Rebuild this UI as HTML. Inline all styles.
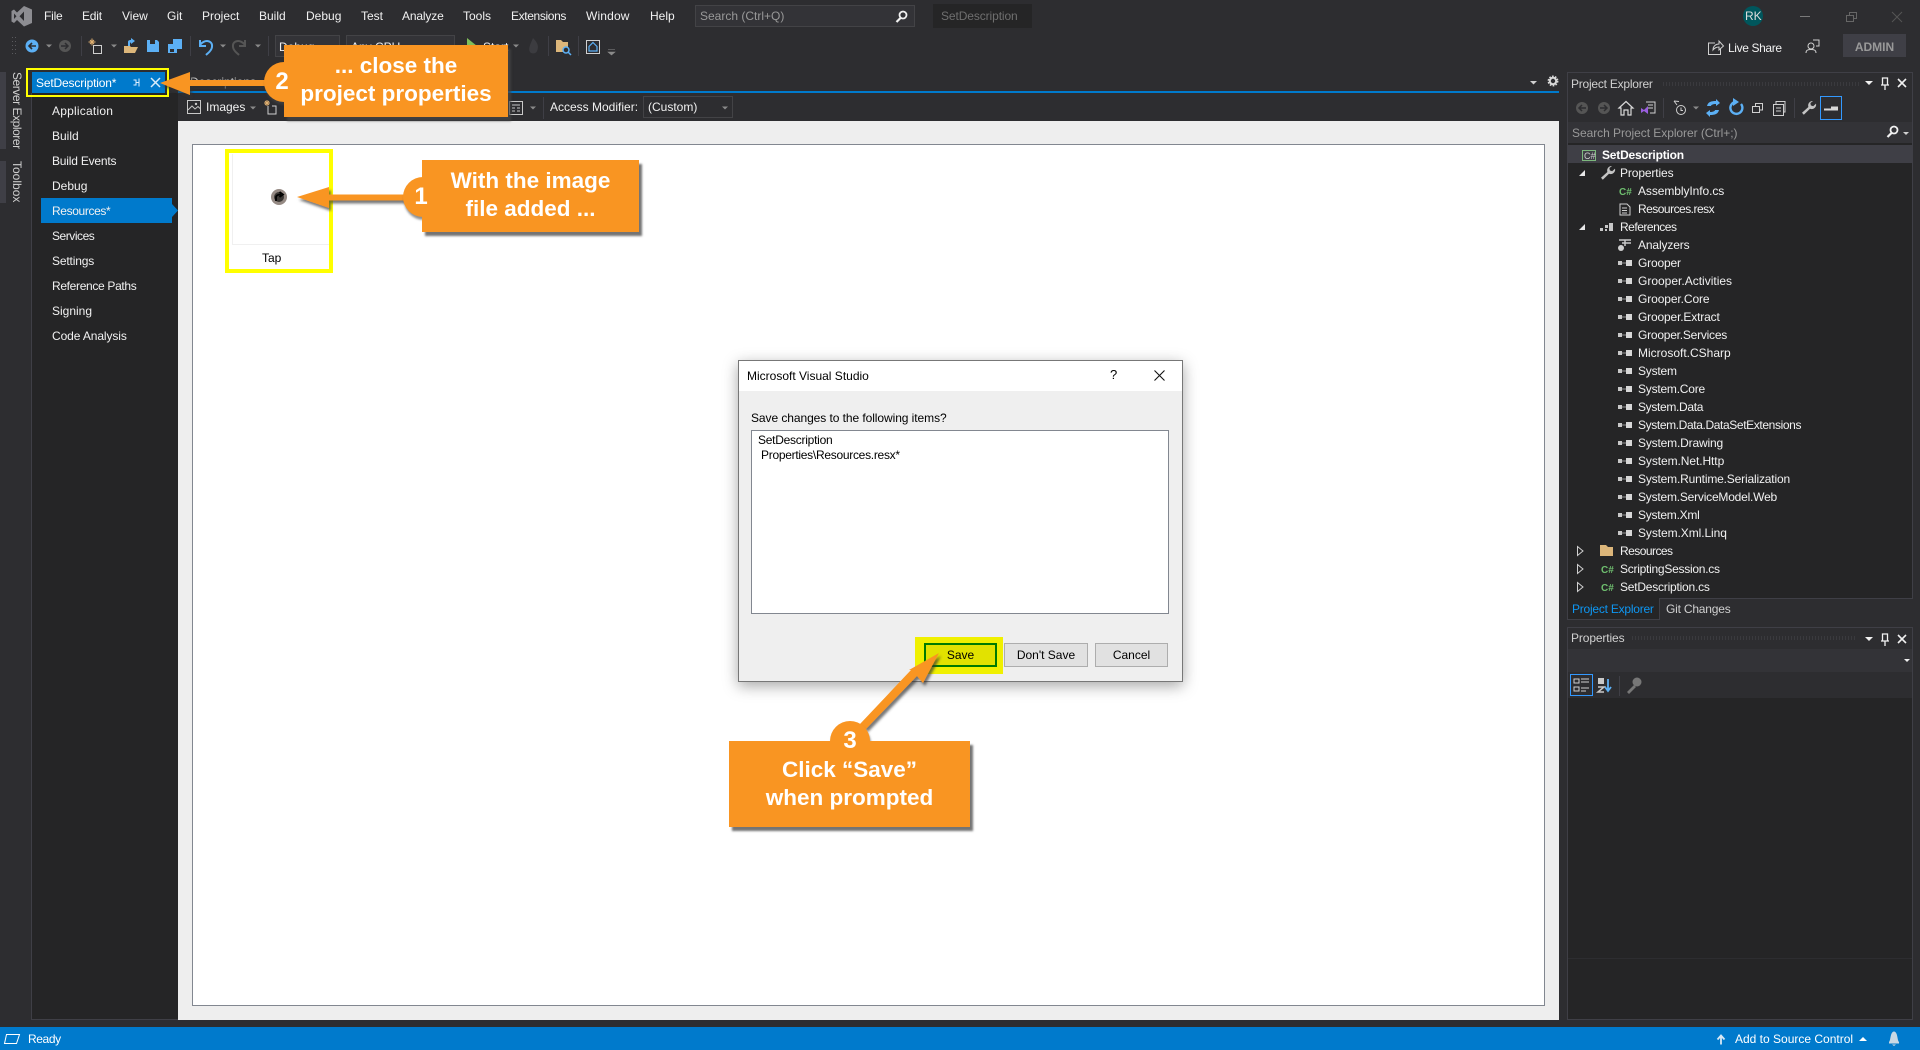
<!DOCTYPE html>
<html lang="en"><head><meta charset="utf-8"><title>SetDescription - Microsoft Visual Studio</title>
<style>
html,body{margin:0;padding:0;width:1920px;height:1050px;overflow:hidden;background:#2d2d30}
body{position:relative;font:12px/16px "Liberation Sans",sans-serif;color:#f1f1f1}
div,span.t{position:absolute}
.t{position:absolute;white-space:nowrap;line-height:16px;font-size:12px}
svg{position:absolute;left:0;top:0;overflow:visible}
.c{position:absolute;background:#f99522;box-shadow:3px 4px 2px rgba(70,70,70,.75);color:#fff;font-weight:bold;font-size:22.5px;line-height:28px;text-align:center}
.n{position:absolute;width:40px;height:40px;border-radius:50%;background:#f99522;box-shadow:1px 3px 2px rgba(70,70,70,.6)}
.g{position:absolute;width:40px;height:40px;color:#fff;font-weight:bold;font-size:24px;line-height:40px;text-align:center}
.btn{position:absolute;top:643px;height:22px;background:#e1e1e1;border:1px solid #adadad;color:#000;text-align:center;line-height:22px}
.d{color:#000}
</style></head><body>
<svg width="0" height="0" style="position:absolute"><defs>
<g id="r"><rect x="0" y="-2" width="4" height="4" fill="#c8c8c8"/><rect x="4" y="-.5" width="4" height="1" fill="#999"/><rect x="8" y="-3" width="6" height="6" fill="#d8d8d8"/></g>
<g id="cs"><text x="0" y="4" font-family="Liberation Sans" font-size="10" font-weight="bold" fill="#6fbf6f">C#</text></g>
<path id="car" d="M-3 -1.5H3L0 1.5Z" fill="#8a8a8a"/>
<path id="tri" d="M-3.5 -4.5L2 0L-3.5 4.5Z" fill="none" stroke="#d0d0d0" stroke-width="1"/>
<path id="wr" d="M5 -7a4.5 4.5 0 0 0-4.6 6l-6.4 5.8 1.8 2 6.2-6a4.5 4.5 0 0 0 6-5.2l-2.8 2.6-2.4-.8-.4-2.4z" fill="#c4c4c4"/>
</defs></svg>

<!-- Main document regions -->
<div style="left:31px;top:93px;width:147px;height:927px;background:#252526;border-left:1px solid #3f3f46;box-sizing:border-box;border-bottom:1px solid #3f3f46"></div>
<div style="left:178px;top:91px;width:1381px;height:2px;background:#007acc"></div>
<div style="left:178px;top:93px;width:1381px;height:28px;background:#2d2d30"></div>
<div style="left:178px;top:121px;width:1381px;height:899px;background:#eeeeee"></div>
<div style="left:192px;top:144px;width:1353px;height:862px;background:#fff;border:1px solid #828790;box-sizing:border-box"></div>
<div style="left:0;top:1020px;width:1920px;height:7px;background:#2d2d30"></div>
<div style="left:0;top:1027px;width:1920px;height:23px;background:#007acc"></div>

<!-- Menu bar -->
<span class="t" style="left:44px;top:8px;letter-spacing:-.2px">File</span>
<span class="t" style="left:82px;top:8px;letter-spacing:-.2px">Edit</span>
<span class="t" style="left:122px;top:8px">View</span>
<span class="t" style="left:167px;top:8px">Git</span>
<span class="t" style="left:202px;top:8px">Project</span>
<span class="t" style="left:259px;top:8px">Build</span>
<span class="t" style="left:306px;top:8px">Debug</span>
<span class="t" style="left:361px;top:8px">Test</span>
<span class="t" style="left:402px;top:8px;letter-spacing:-.15px">Analyze</span>
<span class="t" style="left:463px;top:8px">Tools</span>
<span class="t" style="left:511px;top:8px;letter-spacing:-.37px">Extensions</span>
<span class="t" style="left:586px;top:8px;letter-spacing:.15px">Window</span>
<span class="t" style="left:650px;top:8px">Help</span>
<div style="left:695px;top:5px;width:220px;height:22px;background:#333337;border:1px solid #434346;box-sizing:border-box"></div>
<span class="t" style="left:700px;top:8px;color:#999">Search (Ctrl+Q)</span>
<div style="left:933px;top:4px;width:99px;height:24px;background:#252526"></div>
<span class="t" style="left:941px;top:8px;color:#6f6f6f;letter-spacing:-.1px">SetDescription</span>
<div style="left:1743px;top:6px;width:20px;height:20px;border-radius:50%;background:#00565c"></div>
<span class="t" style="left:1745px;top:8px;width:16px;text-align:center;color:#ddd">RK</span>

<!-- Toolbar -->
<div style="left:275px;top:35px;width:65px;height:22px;background:#333337;border:1px solid #434346;box-sizing:border-box"></div>
<span class="t" style="left:279px;top:39px">Debug</span>
<div style="left:346px;top:35px;width:109px;height:22px;background:#333337;border:1px solid #434346;box-sizing:border-box"></div>
<span class="t" style="left:351px;top:39px">Any CPU</span>
<span class="t" style="left:483px;top:39px">Start</span>
<span class="t" style="left:1728px;top:40px;letter-spacing:-.37px">Live Share</span>
<div style="left:1843px;top:34px;width:63px;height:23px;background:#3f3f46"></div>
<span class="t" style="left:1843px;top:39px;width:63px;text-align:center;color:#999;font-weight:bold;font-size:12px">ADMIN</span>

<!-- Left vertical tabs -->
<div style="left:0;top:72px;width:6px;height:77px;background:#3f3f46"></div>
<div style="left:0;top:161px;width:6px;height:42px;background:#3f3f46"></div>
<span class="t" style="left:10px;top:72px;writing-mode:vertical-rl;color:#d0d0d0;line-height:14px;letter-spacing:-.45px">Server Explorer</span>
<span class="t" style="left:10px;top:161px;writing-mode:vertical-rl;color:#d0d0d0;line-height:14px">Toolbox</span>

<!-- Document tab -->
<span class="t" style="left:190px;top:74px;color:#c8c8c8">Descriptions</span>
<div style="left:32px;top:72px;width:133px;height:21px;background:#007acc"></div>
<span class="t" style="left:36px;top:75px;color:#fff;letter-spacing:-.16px">SetDescription*</span>
<div style="left:26px;top:68px;width:143px;height:29px;border:2.5px solid #ffff00;box-sizing:border-box"></div>

<!-- Nav list -->
<div style="left:41px;top:198px;width:131px;height:25px;background:#007acc"></div>
<span class="t" style="left:52px;top:103px;letter-spacing:.22px">Application</span>
<span class="t" style="left:52px;top:128px">Build</span>
<span class="t" style="left:52px;top:153px;letter-spacing:-.2px">Build Events</span>
<span class="t" style="left:52px;top:178px">Debug</span>
<span class="t" style="left:52px;top:203px;letter-spacing:-.37px">Resources*</span>
<span class="t" style="left:52px;top:228px;letter-spacing:-.46px">Services</span>
<span class="t" style="left:52px;top:253px;letter-spacing:-.15px">Settings</span>
<span class="t" style="left:52px;top:278px;letter-spacing:-.33px">Reference Paths</span>
<span class="t" style="left:52px;top:303px">Signing</span>
<span class="t" style="left:52px;top:328px;letter-spacing:-.1px">Code Analysis</span>

<!-- Designer toolbar -->
<span class="t" style="left:206px;top:99px">Images</span>
<span class="t" style="left:550px;top:99px">Access Modifier:</span>
<div style="left:643px;top:96px;width:90px;height:22px;background:#2d2d30;border:1px solid #434346;box-sizing:border-box"></div>
<span class="t" style="left:648px;top:99px">(Custom)</span>

<!-- Resource thumbnail -->
<div style="left:225px;top:149px;width:108px;height:124px;border:4.5px solid #ffff00;box-sizing:border-box;background:#fff"></div>
<div style="left:232px;top:154px;width:97px;height:91px;border-left:1px solid #f0f0f0;border-bottom:1px solid #f0f0f0;box-sizing:border-box"></div>
<span class="t d" style="left:262px;top:250px">Tap</span>

<!-- Right: Project Explorer -->
<div style="left:1567px;top:72px;width:346px;height:527px;background:#252526;border:1px solid #3f3f46;box-sizing:border-box"></div>
<div style="left:1568px;top:73px;width:344px;height:49px;background:#2d2d30"></div>
<span class="t" style="left:1571px;top:76px;color:#d0d0d0;letter-spacing:-.23px">Project Explorer</span>
<div style="left:1568px;top:122px;width:344px;height:21px;background:#333337"></div>
<span class="t" style="left:1572px;top:125px;color:#999;letter-spacing:-.05px">Search Project Explorer (Ctrl+;)</span>
<div style="left:1568px;top:145px;width:344px;height:18px;background:#3f3f46"></div>
<span class="t" style="left:1602px;top:147px;font-weight:bold;color:#fff;letter-spacing:-.2px">SetDescription</span>
<span class="t" style="left:1620px;top:165px;letter-spacing:-.12px">Properties</span>
<span class="t" style="left:1638px;top:183px;letter-spacing:-.08px">AssemblyInfo.cs</span>
<span class="t" style="left:1638px;top:201px;letter-spacing:-.52px">Resources.resx</span>
<span class="t" style="left:1620px;top:219px;letter-spacing:-.49px">References</span>
<span class="t" style="left:1638px;top:237px;letter-spacing:-.13px">Analyzers</span>
<span class="t" style="left:1638px;top:255px;letter-spacing:-.17px">Grooper</span>
<span class="t" style="left:1638px;top:273px">Grooper.Activities</span>
<span class="t" style="left:1638px;top:291px;letter-spacing:-.1px">Grooper.Core</span>
<span class="t" style="left:1638px;top:309px;letter-spacing:-.16px">Grooper.Extract</span>
<span class="t" style="left:1638px;top:327px;letter-spacing:-.23px">Grooper.Services</span>
<span class="t" style="left:1638px;top:345px">Microsoft.CSharp</span>
<span class="t" style="left:1638px;top:363px;letter-spacing:-.2px">System</span>
<span class="t" style="left:1638px;top:381px;letter-spacing:-.22px">System.Core</span>
<span class="t" style="left:1638px;top:399px;letter-spacing:-.33px">System.Data</span>
<span class="t" style="left:1638px;top:417px;letter-spacing:-.38px">System.Data.DataSetExtensions</span>
<span class="t" style="left:1638px;top:435px;letter-spacing:-.17px">System.Drawing</span>
<span class="t" style="left:1638px;top:453px;letter-spacing:-.08px">System.Net.Http</span>
<span class="t" style="left:1638px;top:471px;letter-spacing:-.17px">System.Runtime.Serialization</span>
<span class="t" style="left:1638px;top:489px;letter-spacing:-.21px">System.ServiceModel.Web</span>
<span class="t" style="left:1638px;top:507px;letter-spacing:-.24px">System.Xml</span>
<span class="t" style="left:1638px;top:525px;letter-spacing:-.08px">System.Xml.Linq</span>
<span class="t" style="left:1620px;top:543px;letter-spacing:-.54px">Resources</span>
<span class="t" style="left:1620px;top:561px;letter-spacing:-.26px">ScriptingSession.cs</span>
<span class="t" style="left:1620px;top:579px;letter-spacing:-.22px">SetDescription.cs</span>
<div style="left:1567px;top:598px;width:93px;height:22px;background:#252526;border:1px solid #3f3f46;border-top:0;box-sizing:border-box"></div>
<span class="t" style="left:1572px;top:601px;color:#0e97f3;letter-spacing:-.23px">Project Explorer</span>
<span class="t" style="left:1666px;top:601px;color:#d0d0d0;letter-spacing:-.2px">Git Changes</span>

<!-- Right: Properties -->
<div style="left:1567px;top:627px;width:346px;height:393px;background:#252526;border:1px solid #3f3f46;box-sizing:border-box"></div>
<div style="left:1568px;top:628px;width:344px;height:70px;background:#2d2d30"></div>
<div style="left:1568px;top:649px;width:344px;height:23px;background:#333337"></div>
<div style="left:1568px;top:958px;width:344px;height:1px;background:#2d2d30"></div>
<span class="t" style="left:1571px;top:630px;color:#d0d0d0;letter-spacing:-.12px">Properties</span>

<!-- Status bar text -->
<span class="t" style="left:28px;top:1031px;color:#fff;letter-spacing:-.4px">Ready</span>
<span class="t" style="left:1735px;top:1031px;color:#fff">Add to Source Control</span>

<!-- Icons -->
<svg width="1920" height="1050" viewBox="0 0 1920 1050" fill="none">
<!-- VS logo -->
<path d="M24 6L32 9.5V23L24 26.5L17 20L14 23L11.5 21.5V11L14 9.5L17 12.5ZM24 11.5L19.5 16.3L24 21ZM14 13.5V19L16.5 16.3Z" fill="#8d8d92"/>
<!-- grip -->
<g fill="#5a5a5e"><rect x="12" y="37" width="1" height="1"/><rect x="15" y="37" width="1" height="1"/><rect x="12" y="41" width="1" height="1"/><rect x="15" y="41" width="1" height="1"/><rect x="12" y="45" width="1" height="1"/><rect x="15" y="45" width="1" height="1"/><rect x="12" y="49" width="1" height="1"/><rect x="15" y="49" width="1" height="1"/><rect x="12" y="53" width="1" height="1"/><rect x="15" y="53" width="1" height="1"/></g>
<!-- back/forward -->
<circle cx="32" cy="46" r="6.5" fill="#5cb0f5"/><path d="M36 46H29M32 43L29 46L32 49" stroke="#2d2d30" stroke-width="1.6"/>
<use href="#car" x="49" y="46"/>
<circle cx="65" cy="46" r="6" fill="#555"/><path d="M61 46H68M65 43L68 46L65 49" stroke="#2d2d30" stroke-width="1.5"/>
<g fill="#3f3f46"><rect x="81" y="36" width="1" height="20"/><rect x="190" y="36" width="1" height="20"/><rect x="268" y="36" width="1" height="20"/><rect x="548" y="36" width="1" height="20"/><rect x="578" y="36" width="1" height="20"/></g>
<!-- new project -->
<path d="M93.500 45.500H101.500V53.500H93.500Z" stroke="#d0d0d0"/><path d="M92 38.500V45.500M88.500 42H95.500M90 40L94 44M94 40L90 44" stroke="#e0b070"/>
<use href="#car" x="114" y="46"/>
<!-- open -->
<path d="M124 46H130L131 47H138L135 53H124Z" fill="#dcb67a"/><path d="M128 46V42C128 40.500 129 40 131 40V38L135 41L131 44V42.500C130 42.500 130 43 130 44V46Z" fill="#5cb0f5"/>
<!-- save -->
<path d="M147 40H157L159 42V52H147Z" fill="#5cb0f5"/><rect x="150" y="40" width="5" height="4" fill="#2d2d30"/>
<path d="M168 44H177V53H168Z" fill="#5cb0f5"/><path d="M173 39H182V49H177V44H173Z" fill="#5cb0f5"/><rect x="170" y="49" width="4" height="3" fill="#2d2d30"/>
<!-- undo/redo -->
<path d="M200 40V46H206M200 45C204 39 213 40 212 47C211.500 51 208 53 206 55" stroke="#5cb0f5" stroke-width="2"/>
<use href="#car" x="223" y="46"/>
<path d="M245 40V46H239M245 45C241 39 232 40 233 47C233.500 51 237 53 239 55" stroke="#555" stroke-width="2"/>
<use href="#car" x="258" y="46"/>
<path d="M467 38L477 46L467 54Z" fill="#7fbf5a"/>
<use href="#car" x="516" y="46"/>
<path d="M533 38C538 43 539 47 537 51C536 54 531 54 530 52C528 49 530 45 533 38Z" fill="#3c3c40"/>
<!-- folder find -->
<path d="M556 40H561L563 42H568V52H556Z" fill="#dcb67a"/><circle cx="566" cy="50" r="3" stroke="#5cb0f5" stroke-width="1.500" fill="#2d2d30"/><path d="M568 52L571 55" stroke="#5cb0f5" stroke-width="1.500"/>
<!-- home box -->
<rect x="586.500" y="40.500" width="13" height="13" stroke="#d0d0d0"/><path d="M593 42.500L597 46.500V51H589V46.500Z" stroke="#5cb0f5" stroke-width="1.200"/>
<path d="M608 49.500H615M608 52H615L611.500 55Z" fill="#8a8a8a" stroke="#8a8a8a" stroke-width=".6"/>
<!-- search -->
<circle cx="903" cy="15" r="3.500" stroke="#f1f1f1" stroke-width="1.800"/><path d="M900.500 18L896.500 22" stroke="#f1f1f1" stroke-width="2.200"/>
<!-- window buttons -->
<path d="M1800 16.500H1810" stroke="#7a7a7a"/>
<rect x="1846.500" y="15.500" width="7" height="6" stroke="#666"/><path d="M1849.500 15.500V12.500H1856.500V18.500H1853.500" stroke="#666"/>
<path d="M1892 12L1902 22M1902 12L1892 22" stroke="#555"/>
<!-- live share -->
<path d="M1715 43H1708.500V54.500H1720.500V49" stroke="#d0d0d0"/><path d="M1713 50C1713 46 1716 44 1719 44V41L1723.500 46L1719 50V47C1716 47 1714.500 48 1713 50Z" stroke="#d0d0d0" fill="#2d2d30"/>
<!-- feedback -->
<path d="M1813 40H1819V46H1816" stroke="#d0d0d0"/><circle cx="1811" cy="46" r="3" stroke="#d0d0d0"/><path d="M1806 53C1806 50 1808 49.500 1811 49.500C1814 49.500 1816 50 1816 53" stroke="#d0d0d0"/>
<!-- gear -->
<circle cx="1553" cy="81" r="3.200" stroke="#d8d8d8" stroke-width="2"/><circle cx="1553" cy="81" r="4.700" stroke="#d8d8d8" stroke-width="1.500" stroke-dasharray="1.700 1.300"/>
<path d="M1530 81H1537L1533.500 84.500Z" fill="#d0d0d0"/>
<!-- doc tab pin/close -->
<path d="M133.500 80H136V85H133.500M136 82.500H139V78.500M139 86.500V82.500" stroke="#e0f0ff"/>
<path d="M151 78L160 87M160 78L151 87" stroke="#d8ecfa" stroke-width="1.500"/>
<!-- resources caret -->
<path d="M172 204L178 210.500L172 217Z" fill="#007acc"/>
<!-- image icon + add -->
<rect x="187.500" y="100.500" width="13" height="13" stroke="#c8c8c8"/><path d="M188 110L192 106L195 109L198 106.500L200 108.500" stroke="#c8c8c8"/><circle cx="196" cy="104" r="1.200" fill="#c8c8c8"/>
<use href="#car" x="253" y="108"/>
<path d="M268 106V114H276V106H272" stroke="#d0d0d0"/><path d="M267 100V106M264 103H270M265 101L269 105M269 101L265 105" stroke="#e0b070"/>
<rect x="509.500" y="101.500" width="13" height="13" stroke="#c8c8c8"/><path d="M512 105H520M512 108H515M517 108H520M512 111H515M517 111H520" stroke="#c8c8c8"/>
<use href="#car" x="533" y="108"/>
<rect x="543" y="97" width="1" height="22" fill="#3f3f46"/>
<use href="#car" x="725" y="108"/>
<!-- PE header -->
<path d="M1865 81H1873L1869 85Z" fill="#f1f1f1"/>
<path d="M1882.500 78H1887.500V85H1882.500ZM1881 85H1889M1885 85V90" stroke="#f1f1f1" stroke-width="1.300"/>
<path d="M1898 79L1906 87M1906 79L1898 87" stroke="#f1f1f1" stroke-width="1.600"/>
<path d="M1663 84H1860" stroke="#3a3a3e" stroke-dasharray="1 2" stroke-width="4"/>
<circle cx="1582" cy="108" r="6" fill="#555"/><path d="M1586 108H1579M1582 105L1579 108L1582 111" stroke="#2d2d30" stroke-width="1.500"/>
<circle cx="1604" cy="108" r="6" fill="#555"/><path d="M1600 108H1607M1604 105L1607 108L1604 111" stroke="#2d2d30" stroke-width="1.500"/>
<path d="M1619 108L1626 101.500L1633 108H1631V115H1628V110H1624V115H1621V108Z" stroke="#d8d8d8" stroke-width="1.200"/>
<path d="M1646 102H1655V113H1650" stroke="#d0d0d0"/><path d="M1648 105H1653M1648 108H1653" stroke="#d0d0d0"/><path d="M1641 108L1644 110L1648 106V114L1644 111L1641 113Z" fill="#9b5fe0"/>
<g fill="#3f3f46"><rect x="1663" y="98" width="1" height="20"/><rect x="1794" y="98" width="1" height="20"/></g>
<circle cx="1681" cy="110" r="4.500" stroke="#d0d0d0"/><path d="M1681 107.500V110.500H1683M1674 101L1677 105M1674 101L1679 101.500" stroke="#d0d0d0"/>
<use href="#car" x="1696" y="108"/>
<path d="M1707 106C1708 102 1711 101 1716 101V99L1720 103L1716 106V104C1713 104 1711 105 1711 106ZM1719 110C1718 114 1715 115 1710 115V117L1706 113L1710 110V112C1713 112 1715 111 1715 110Z" fill="#5cb0f5"/>
<path d="M1741 104A6 6 0 1 1 1735 102" stroke="#5cb0f5" stroke-width="2.400"/><path d="M1733 98L1739 102L1733 106Z" fill="#5cb0f5"/>
<rect x="1752.500" y="106.500" width="7" height="6" stroke="#d0d0d0"/><path d="M1755.500 106V103.500H1762.500V110H1760" stroke="#d0d0d0"/>
<rect x="1773.500" y="104.500" width="10" height="11" stroke="#d0d0d0"/><path d="M1776 104V101.500H1785V112H1784M1776 108H1781M1776 111H1781" stroke="#d0d0d0"/>
<g transform="translate(1808,108)"><use href="#wr"/></g>
<rect x="1820.500" y="96.500" width="21" height="23" stroke="#3399ff"/><path d="M1824 109.500H1838M1831 107.500H1838" stroke="#d8d8d8" stroke-width="2"/>
<circle cx="1894" cy="130" r="3.500" stroke="#f1f1f1" stroke-width="1.800"/><path d="M1891.500 133L1887.500 137" stroke="#f1f1f1" stroke-width="2.200"/>
<path d="M1903 132H1909L1906 135Z" fill="#d0d0d0"/>
<!-- tree icons -->
<rect x="1582.500" y="150.500" width="13" height="10" stroke="#7db87d"/>
<text x="1584" y="159" font-family="Liberation Sans" font-size="9" fill="#d0d0d0">C#</text>
<path d="M1585 170V176H1579Z" fill="#e8e8e8"/><path d="M1585 224V230H1579Z" fill="#e8e8e8"/>
<g transform="translate(1607,173)"><use href="#wr"/></g>
<use href="#cs" x="1619" y="191"/>
<path d="M1620 204H1627L1630 207V215H1620Z" stroke="#d0d0d0"/><path d="M1622 208H1627M1622 210.500H1627M1622 213H1627" stroke="#d0d0d0"/>
<g fill="#c8c8c8"><rect x="1600" y="228" width="3" height="3"/><rect x="1605" y="225" width="3" height="3"/><rect x="1609" y="223" width="4" height="8"/><rect x="1605" y="229" width="2" height="2"/></g>
<path d="M1619 240H1631M1622 243H1631M1625 240V246" stroke="#c8c8c8" stroke-width="1.500"/><circle cx="1621" cy="248" r="3" fill="#d0d0d0"/>
<use href="#r" x="1618" y="263"/><use href="#r" x="1618" y="281"/><use href="#r" x="1618" y="299"/><use href="#r" x="1618" y="317"/><use href="#r" x="1618" y="335"/><use href="#r" x="1618" y="353"/><use href="#r" x="1618" y="371"/><use href="#r" x="1618" y="389"/><use href="#r" x="1618" y="407"/><use href="#r" x="1618" y="425"/><use href="#r" x="1618" y="443"/><use href="#r" x="1618" y="461"/><use href="#r" x="1618" y="479"/><use href="#r" x="1618" y="497"/><use href="#r" x="1618" y="515"/><use href="#r" x="1618" y="533"/>
<use href="#tri" x="1581" y="551"/><use href="#tri" x="1581" y="569"/><use href="#tri" x="1581" y="587"/>
<path d="M1600 545H1606L1608 547H1613V556H1600Z" fill="#dcb67a"/>
<use href="#cs" x="1601" y="569"/><use href="#cs" x="1601" y="587"/>
<!-- Properties header -->
<path d="M1632 638H1857" stroke="#3a3a3e" stroke-dasharray="1 2" stroke-width="4"/>
<path d="M1865 637H1873L1869 641Z" fill="#f1f1f1"/>
<path d="M1882.500 634H1887.500V641H1882.500ZM1881 641H1889M1885 641V646" stroke="#f1f1f1" stroke-width="1.300"/>
<path d="M1898 635L1906 643M1906 635L1898 643" stroke="#f1f1f1" stroke-width="1.600"/>
<path d="M1904 659H1910L1907 662Z" fill="#f1f1f1"/>
<rect x="1570.500" y="674.500" width="22" height="21" stroke="#3399ff"/>
<path d="M1574 679H1579V683H1574ZM1574 687H1579V691H1574ZM1581 679H1589M1581 682H1589M1581 688H1589M1581 691H1586" stroke="#d0d0d0"/>
<rect x="1598" y="678" width="6" height="6" fill="#c8c8c8"/><path d="M1598 687H1604L1598 692H1604" stroke="#c8c8c8" stroke-width="1.500"/><path d="M1608 679V690M1605 687L1608 691L1611 687" stroke="#5cb0f5" stroke-width="1.800"/>
<rect x="1619" y="676" width="1" height="20" fill="#3f3f46"/>
<circle cx="1637" cy="682" r="4.500" fill="#777"/><path d="M1634 685L1627 692L1629 694L1636 687" fill="#777"/>
<!-- status icons -->
<path d="M6.500 1034.500H19.500L16.500 1043.500H4.500Z" stroke="#fff" stroke-width="1"/>
<path d="M1721 1044.500V1036M1717.500 1039.500L1721 1035.500L1724.500 1039.500" stroke="#d8e8f4" stroke-width="1.800"/>
<path d="M1859 1041H1867L1863 1037Z" fill="#fff"/>
<path d="M1889 1042C1891 1040 1890 1032 1894 1031.500C1898 1032 1897 1040 1899 1042V1043.500H1889ZM1892 1044.500H1896L1894 1046Z" fill="#c8d8e4"/>
<!-- thumbnail image -->
<circle cx="279" cy="197" r="8" fill="#958a84"/><circle cx="279" cy="197" r="5" fill="#3a3633"/><path d="M276 201V197.500C276 195.500 278 194.500 281 194.500M279.500 192L283 194.500L279.500 197" stroke="#000" stroke-width="1.800"/>
</svg>

<!-- Dialog -->
<div style="left:738px;top:360px;width:445px;height:322px;background:#efefef;border:1px solid #777;box-sizing:border-box;box-shadow:0 4px 14px rgba(0,0,0,.35)"></div>
<div style="left:739px;top:361px;width:443px;height:30px;background:#fff"></div>
<span class="t d" style="left:747px;top:368px">Microsoft Visual Studio</span>
<span class="t d" style="left:1110px;top:367px;font-size:13px">?</span>
<svg width="1920" height="1050" fill="none" style="pointer-events:none"><path d="M1154.500 370.500L1164.500 380.500M1164.500 370.500L1154.500 380.500" stroke="#111" stroke-width="1.100"/></svg>
<span class="t d" style="left:751px;top:410px;letter-spacing:-.07px">Save changes to the following items?</span>
<div style="left:751px;top:430px;width:418px;height:184px;background:#fff;border:1px solid #828790;box-sizing:border-box"></div>
<span class="t d" style="left:758px;top:432px;letter-spacing:-.26px">SetDescription</span>
<span class="t d" style="left:761px;top:447px;letter-spacing:-.28px">Properties\Resources.resx*</span>
<div style="left:915px;top:637px;width:88px;height:37px;background:#f0f000"></div>
<div style="left:924px;top:643px;width:73px;height:24px;background:#e2e200;border:2px solid #007a00;box-sizing:border-box"></div>
<span class="t d" style="left:924px;top:647px;width:73px;text-align:center">Save</span>
<div class="btn" style="left:1004px;width:82px">Don't Save</div>
<div class="btn" style="left:1095px;width:71px">Cancel</div>

<!-- Callout arrows -->
<svg width="1920" height="1050" style="pointer-events:none">
<defs><filter id="sh" x="-20%" y="-20%" width="140%" height="140%"><feDropShadow dx="2" dy="3" stdDeviation="1.200" flood-color="#333" flood-opacity=".65"/></filter></defs>
<path d="M160 83L190 72V80H270V86H190V95Z" fill="#f99522" filter="url(#sh)"/>
<path d="M297 197L329 187V194.500H410V200.500H329V208Z" fill="#f99522" filter="url(#sh)"/>
<path d="M939 653L923 683L917 676L866 729L860 724L911 670L909 670Z" fill="#f99522" filter="url(#sh)"/>
</svg>

<!-- Callouts -->
<div class="n" style="left:264px;top:62px"></div>
<div class="c" style="left:284px;top:45px;width:224px;height:72px;padding-top:7px;box-sizing:border-box">... close the<br>project properties</div>
<div class="g" style="left:262px;top:62px">2</div>
<div class="n" style="left:403px;top:177px"></div>
<div class="c" style="left:422px;top:160px;width:217px;height:72px;padding-top:7px;box-sizing:border-box">With the image<br>file added ...</div>
<div class="g" style="left:401px;top:177px">1</div>
<div class="n" style="left:830px;top:721px"></div>
<div class="c" style="left:729px;top:741px;width:241px;height:86px;padding-top:15px;box-sizing:border-box">Click “Save”<br>when prompted</div>
<div style="left:830px;top:741px;width:40px;height:20px;overflow:hidden"><div class="n" style="left:0;top:-20px;box-shadow:none"></div></div>
<div class="g" style="left:830px;top:721px">3</div>
</body></html>
